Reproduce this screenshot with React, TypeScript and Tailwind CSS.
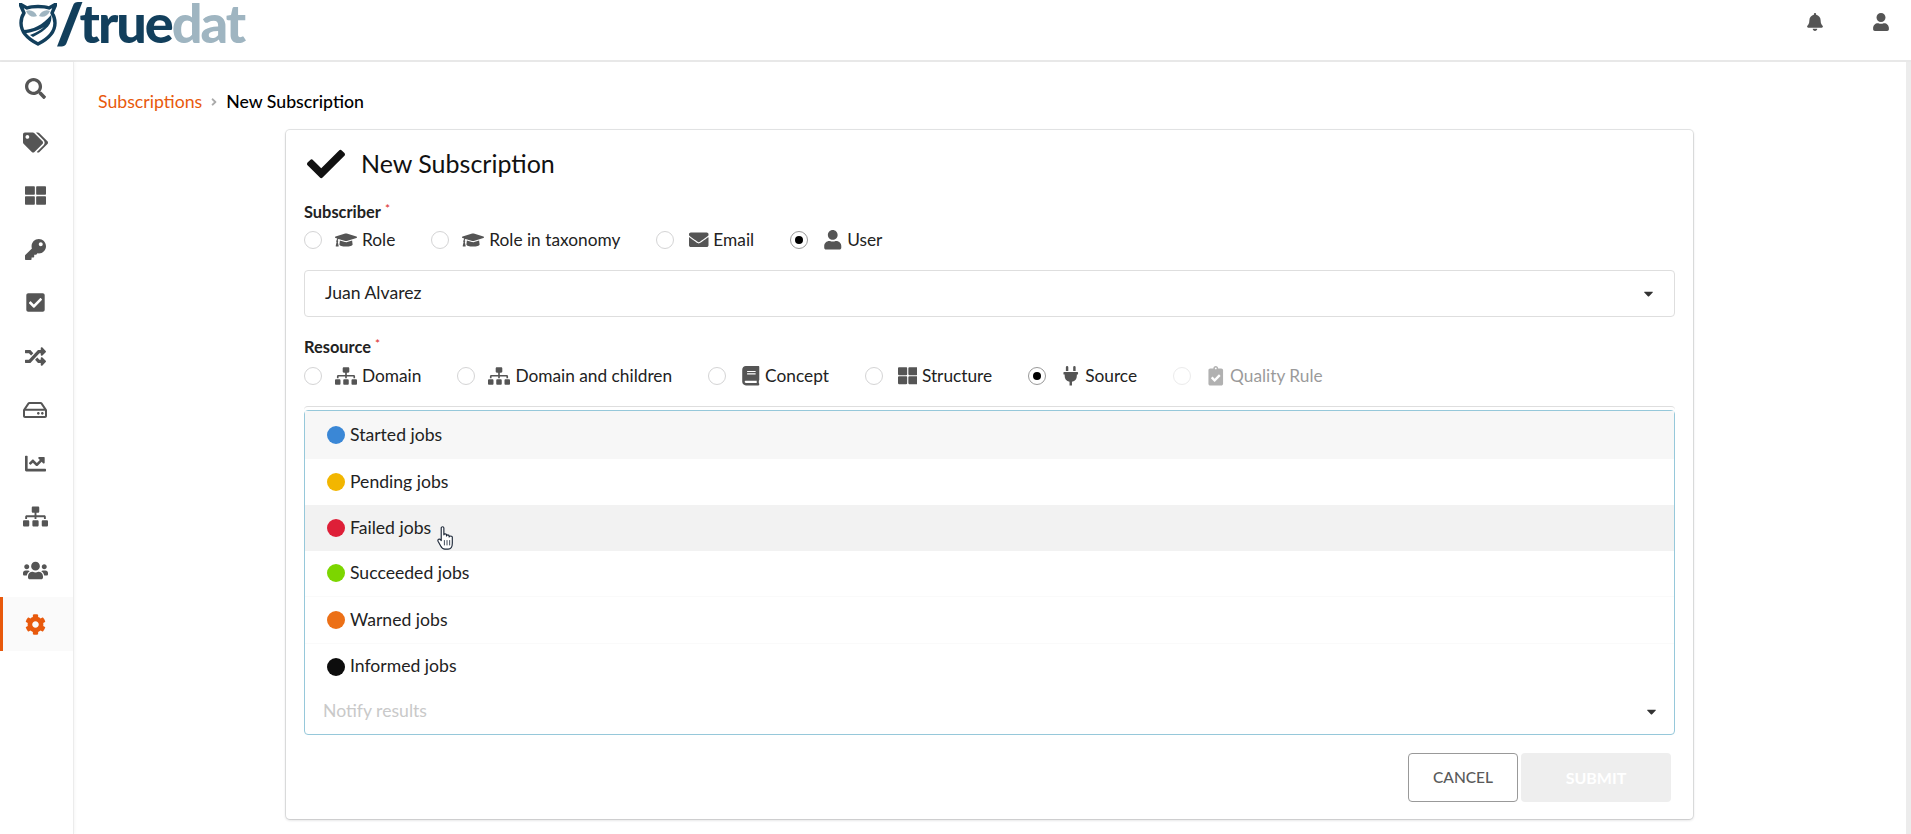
import { ReactNode } from "react";
import {
  FaAngleRight,
  FaBell,
  FaBook,
  FaCaretDown,
  FaChartLine,
  FaCheck,
  FaCheckSquare,
  FaClipboardCheck,
  FaCog,
  FaEnvelope,
  FaGraduationCap,
  FaKey,
  FaPlug,
  FaRandom,
  FaRegHdd,
  FaSearch,
  FaSitemap,
  FaTags,
  FaThLarge,
  FaUser,
  FaUsers,
} from "react-icons/fa";

const Logo = () => (
  <div className="flex h-[46px] items-start pl-[19px]">
    <svg width="38" height="43" viewBox="0 0 38 43" className="shrink-0 mt-[3px]">
      <path d="M1 1 L8 5 C13 3 25 3 30 5 L37 1 L33 10 C35 13 36 16 36 20 C36 30 29 36 19 41 C9 36 2 30 2 20 C2 16 3 13 5 10 Z" fill="none" stroke="#123f5c" strokeWidth="3.4" strokeLinejoin="round" />
      <path d="M7 8 C11 6 16 8 18 13 C14 15 9 13 7 8 Z M31 8 C27 6 22 8 20 13 C24 15 29 13 31 8 Z" fill="#9fb5c1" />
      <path d="M4 27 C13 27 24 22 32 12 C34 20 28 27 14 34 L11 32 C18 29 22 27 25 24 C18 28 10 30 6 30 Z" fill="#123f5c" />
    </svg>
    <span className="text-[54px] leading-[46px] font-black font-['Lato'] text-[#123f5c] [-webkit-text-stroke:2px_#123f5c]">/</span>
    <span className="-ml-[3px] text-[54px] leading-[46px] font-black tracking-[-2px] font-['Lato'] text-[#123f5c]">
      true<span className="text-[#9fb5c1]">dat</span>
    </span>
  </div>
);

const navItems = [
  { icon: <FaSearch />, size: "text-[21px]" },
  { icon: <FaTags />, size: "text-[25px]" },
  { icon: <FaThLarge />, size: "text-[21px]" },
  { icon: <FaKey />, size: "text-[21px]" },
  { icon: <FaCheckSquare />, size: "text-[21px]" },
  { icon: <FaRandom />, size: "text-[21px]" },
  { icon: <FaRegHdd />, size: "text-[24px]" },
  { icon: <FaChartLine />, size: "text-[21px]" },
  { icon: <FaSitemap />, size: "text-[25px]" },
  { icon: <FaUsers />, size: "text-[25px]" },
];

const Sidebar = () => (
  <aside className="w-[74px] shrink-0 border-r border-[#ececec] shadow-[1px_0_3px_rgba(0,0,0,0.04)] bg-white">
    {navItems.map((item, i) => (
      <div key={i} className={`h-[53.5px] pr-[3px] flex items-center justify-center text-[#555555] ${item.size}`}>
        {item.icon}
      </div>
    ))}
    <div className="h-[54px] pr-[3px] flex items-center justify-center text-[21px] text-[#e8590c] bg-[#fafafa] border-l-[3px] border-[#e8590c]">
      <FaCog className="-ml-[3px]" />
    </div>
  </aside>
);

const Radio = ({ label, icon, checked, disabled, wide }: { label: string; icon: ReactNode; checked?: boolean; disabled?: boolean; wide?: boolean }) => (
  <div className={`flex items-center ${disabled ? "opacity-45" : ""}`}>
    <span className={`w-[18px] h-[18px] rounded-full border bg-white flex items-center justify-center ${checked ? "border-[#999999]" : "border-[#d4d4d5]"}`}>
      {checked && <span className="w-[8px] h-[8px] rounded-full bg-black" />}
    </span>
    {wide ? (
      <span className="ml-[13px] w-[27px] text-[22px] text-[#555555]">{icon}</span>
    ) : (
      <span className="ml-[15px] w-[24px] text-[19.5px] text-[#555555]">{icon}</span>
    )}
    <span className="text-[17.3px] text-[#222222] leading-[20px]">{label}</span>
  </div>
);

const Label = ({ children }: { children: ReactNode }) => (
  <div className="text-[16.4px] leading-[17px] font-bold text-[#222222]">
    {children}
    <span className="relative -top-[5px] ml-[4px] text-[#db2828] text-[12px] font-normal">*</span>
  </div>
);

const jobs = [
  { label: "Started jobs", color: "bg-[#3a87d6]", row: "bg-[#f7f7f7] h-[47.5px]" },
  { label: "Pending jobs", color: "bg-[#f2b600]", row: "h-[46.5px]" },
  { label: "Failed jobs", color: "bg-[#de1f38]", row: "bg-[#f2f2f2] h-[45.5px]" },
  { label: "Succeeded jobs", color: "bg-[#7cd600]", row: "h-[46.5px] border-b border-[#fafafa]" },
  { label: "Warned jobs", color: "bg-[#ec7017]", row: "h-[46.5px] border-b border-[#fafafa]" },
  { label: "Informed jobs", color: "bg-[#0d0d0d]", row: "h-[46px]" },
];

const HandCursor = () => (
  <svg width="19" height="26" viewBox="0 0 18 24" className="absolute left-[132px] top-[20px]">
    <path
      d="M4 2.5 C4 1 6.5 1 6.5 2.5 V9 C6.5 7.8 9 7.8 9 9 V10 C9 8.8 11.5 8.8 11.5 10 V11 C11.5 9.8 14.5 9.8 14.5 11 V17 C14.5 20 13 22.5 10.5 22.5 H7.5 C5.5 22.5 4.5 21.5 3.5 19.5 L1 15 C0.3 13.5 2.3 12.3 3.3 13.6 L4 14.5 Z"
      fill="#ffffff"
      stroke="#1f2a3a"
      strokeWidth="1.1"
      strokeLinejoin="round"
    />
    <path d="M7 14 V19 M9.5 14 V19 M12 14 V19" stroke="#1f2a3a" strokeWidth="0.8" />
  </svg>
);

const App = () => {
  return (
    <div className="h-[834px] overflow-hidden bg-white font-['Lato',sans-serif] flex flex-col">
      <header className="h-[62px] shrink-0 border-b-2 border-[#e8e8e8] flex justify-between">
        <Logo />
        <div className="flex items-start pt-[13px] pr-[21px] gap-[48px] text-[#555555]">
          <FaBell className="text-[18px]" />
          <FaUser className="text-[18px]" />
        </div>
      </header>
      <div className="flex flex-1 min-h-0">
        <Sidebar />
        <main className="flex-1 pt-[30px] pr-[5px] border-r-[5px] border-[#ececec] relative">
          <div className="ml-[24px] flex items-center text-[17.7px] leading-[20px]">
            <span className="text-[#e8590c]">Subscriptions</span>
            <FaAngleRight className="mx-[6px] text-[#aaaaaa] text-[12px]" />
            <span className="font-medium text-black">New Subscription</span>
          </div>
          <section className="ml-[212px] mt-[18px] w-[1407px] h-[689px] rounded-[4px] bg-white shadow-[0_1px_3px_rgba(34,36,38,0.2),0_0_0_1px_rgba(34,36,38,0.1)] pl-[18px] pr-[18px] pt-[16px]">
            <div className="flex items-center h-[36px]">
              <FaCheck className="text-[38px] text-[#111111] ml-[3px]" />
              <h1 className="ml-[16px] text-[25px] font-normal text-[#111111]">New Subscription</h1>
            </div>
            <div className="mt-[21px]">
              <Label>Subscriber</Label>
              <div className="flex mt-[8px] gap-[36px] h-[20px]">
                <Radio label="Role" icon={<FaGraduationCap />} wide />
                <Radio label="Role in taxonomy" icon={<FaGraduationCap />} wide />
                <Radio label="Email" icon={<FaEnvelope />} />
                <Radio label="User" icon={<FaUser />} checked />
              </div>
            </div>
            <div className="mt-[20px] h-[47px] rounded-[4px] border border-[#dedede] flex items-center justify-between pl-[20px] pr-[18px] text-[17.6px] text-[#222222]">
              Juan Alvarez
              <FaCaretDown className="text-[15px] text-[#333333]" />
            </div>
            <div className="mt-[21px]">
              <Label>Resource</Label>
              <div className="flex mt-[9px] gap-[36px] h-[20px]">
                <Radio label="Domain" icon={<FaSitemap />} wide />
                <Radio label="Domain and children" icon={<FaSitemap />} wide />
                <Radio label="Concept" icon={<FaBook />} />
                <Radio label="Structure" icon={<FaThLarge />} />
                <Radio label="Source" icon={<FaPlug />} checked />
                <Radio label="Quality Rule" icon={<FaClipboardCheck />} disabled />
              </div>
            </div>
            <div className="mt-[20px] rounded-[4px] border-t border-[#dedede]">
              <div className="mt-[3px] rounded-[4px] border border-[#96c8da] relative h-[325px] bg-white">
                {jobs.map((job) => (
                  <div key={job.label} className={`flex items-center pl-[22px] text-[17.6px] text-[#222222] relative ${job.row}`}>
                    <span className={`w-[18px] h-[18px] rounded-full mr-[5px] ${job.color}`} />
                    {job.label}
                    {job.label === "Failed jobs" && <HandCursor />}
                  </div>
                ))}
                <div className="flex items-center justify-between pl-[18px] pr-[15px] h-[43px] text-[17.6px] text-[#c9c9c9]">
                  Notify results
                  <FaCaretDown className="text-[15px] text-[#333333]" />
                </div>
              </div>
            </div>
            <div className="flex justify-end mt-[18px] gap-[3px] pr-[4px]">
              <button className="w-[110px] h-[49px] rounded-[4px] border border-[#999999] bg-white text-[15.5px] font-medium text-[#5a5a5a]">CANCEL</button>
              <button className="w-[150px] h-[49px] rounded-[4px] bg-[#eeeeee] text-[16px] font-bold text-white">SUBMIT</button>
            </div>
          </section>
        </main>
      </div>
    </div>
  );
};

export default App;
